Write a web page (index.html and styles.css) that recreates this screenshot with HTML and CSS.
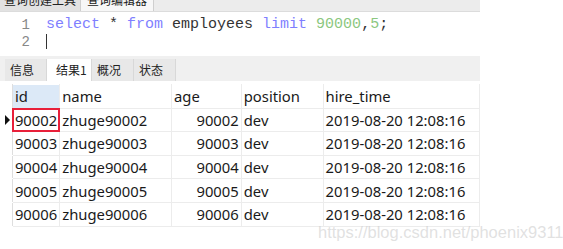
FILE: index.html
```html
<!DOCTYPE html>
<html lang="zh">
<head>
    <meta charset="UTF-8">
    <title>查询编辑器</title>
    <link rel="stylesheet" href="styles.css">
</head>
<body>
    <div class="panel">
        <div class="top-tabs">
            <div class="top-tab">查询创建工具</div>
            <div class="top-tab active">查询编辑器</div>
        </div>

        <div class="editor">
            <div class="line">
                <span class="num">1</span>
                <code><span class="kw">select</span> * <span class="kw">from</span> employees <span class="kw">limit</span> <span class="nb">90000</span>,<span class="nb">5</span>;</code>
            </div>
            <div class="line">
                <span class="num">2</span>
                <code><span class="caret"></span></code>
            </div>
        </div>

        <div class="result-tabs">
            <div class="tab">信息</div>
            <div class="tab active">结果1</div>
            <div class="tab">概况</div>
            <div class="tab">状态</div>
        </div>

        <table class="grid">
            <thead>
                <tr>
                    <th class="mark"></th>
                    <th class="col-id sel">id</th>
                    <th class="col-name">name</th>
                    <th class="col-age">age</th>
                    <th class="col-pos">position</th>
                    <th class="col-time">hire_time</th>
                </tr>
            </thead>
            <tbody>
                <tr>
                    <td class="mark"><span class="arrow"></span></td>
                    <td class="current">90002</td>
                    <td>zhuge90002</td>
                    <td class="num">90002</td>
                    <td>dev</td>
                    <td>2019-08-20 12:08:16</td>
                </tr>
                <tr>
                    <td class="mark"></td>
                    <td>90003</td>
                    <td>zhuge90003</td>
                    <td class="num">90003</td>
                    <td>dev</td>
                    <td>2019-08-20 12:08:16</td>
                </tr>
                <tr>
                    <td class="mark"></td>
                    <td>90004</td>
                    <td>zhuge90004</td>
                    <td class="num">90004</td>
                    <td>dev</td>
                    <td>2019-08-20 12:08:16</td>
                </tr>
                <tr>
                    <td class="mark"></td>
                    <td>90005</td>
                    <td>zhuge90005</td>
                    <td class="num">90005</td>
                    <td>dev</td>
                    <td>2019-08-20 12:08:16</td>
                </tr>
                <tr>
                    <td class="mark"></td>
                    <td>90006</td>
                    <td>zhuge90006</td>
                    <td class="num">90006</td>
                    <td>dev</td>
                    <td>2019-08-20 12:08:16</td>
                </tr>
            </tbody>
        </table>
    </div>

    <div class="watermark">https://blog.csdn.net/phoenix9311</div>
</body>
</html>
```

FILE: styles.css
```css
body {
    margin: 0;
    background: #ffffff;
    font-family: "Noto Sans", "Noto Sans CJK SC", sans-serif;
    color: #1a1a1a;
    position: relative;
    height: 249px;
    overflow: hidden;
}

.panel {
    width: 480px;
}

/* top tabs, cut off by the screenshot */
.top-tabs {
    display: flex;
    height: 11px;
    background: #ececec;
    border-bottom: 1px solid #dcdcdc;
    overflow: hidden;
    font-family: "Noto Sans CJK SC", sans-serif;
    font-size: 12px;
    line-height: 12px;
}

.top-tab {
    padding: 0 4px;
    margin-top: -6px;
    background: #e2e2e2;
    border-right: 1px solid #cfcfcf;
    color: #222;
    white-space: nowrap;
}

.top-tab.active {
    padding: 0 6px;
    background: #f7f7f7;
}

/* sql editor */
.editor {
    height: 40px;
    padding-top: 4px;
    background: #ffffff;
    border-bottom: 3px solid #f0f0f0;
}

.line {
    display: flex;
    height: 17px;
    align-items: center;
}

.line .num {
    width: 30px;
    text-align: right;
    color: #888;
    font-family: "Liberation Mono", monospace;
    font-size: 14px;
}

.line code {
    margin-left: 16px;
    font-family: "Liberation Mono", monospace;
    font-size: 15px;
    color: #333;
}

.kw {
    color: #7f7fff;
}

.nb {
    color: #8cc77f;
}

.caret {
    display: inline-block;
    width: 1px;
    height: 15px;
    background: #333;
    vertical-align: middle;
}

/* result tabs */
.result-tabs {
    display: flex;
    height: 22px;
    padding-left: 5px;
    background: #f0f0f0;
    font-family: "Noto Sans CJK SC", sans-serif;
    font-size: 12px;
}

.tab {
    box-sizing: border-box;
    width: 42px;
    padding-left: 5px;
    line-height: 22px;
    background: #e8e8e8;
    border-right: 1px solid #d8d8d8;
    color: #222;
}

.tab.active {
    width: 45px;
    padding-left: 9px;
    background: #ffffff;
}

/* result grid */
.grid {
    margin-top: 3px;
    border-collapse: collapse;
    font-size: 14.8px;
}

.grid th,
.grid td {
    height: 22.6px;
    padding: 0 2px;
    border: 1px solid #ececec;
    text-align: left;
    font-weight: normal;
    white-space: nowrap;
}

.grid th {
    border-top-color: #ffffff;
}

.grid .mark {
    width: 11px;
    padding: 0;
    border-color: #ffffff;
    border-right: 1px solid #dedede;
}

.arrow {
    display: block;
    width: 0;
    height: 0;
    margin-left: 4px;
    border-top: 5px solid transparent;
    border-bottom: 5px solid transparent;
    border-left: 5px solid #111;
}

.col-id { width: 42px; }
.col-name { width: 108px; }
.col-age { width: 66px; }
.col-pos { width: 78px; }
.col-time { width: 152px; }

.grid th.sel {
    background: #dce9f7;
}

.grid td.num {
    text-align: right;
}

.grid td.current {
    outline: 2px solid #e8203a;
    outline-offset: -2px;
}

.watermark {
    position: absolute;
    left: 318px;
    top: 223px;
    font-family: "Liberation Sans", sans-serif;
    font-size: 16.5px;
    color: rgba(200, 200, 200, 0.55);
}
```
